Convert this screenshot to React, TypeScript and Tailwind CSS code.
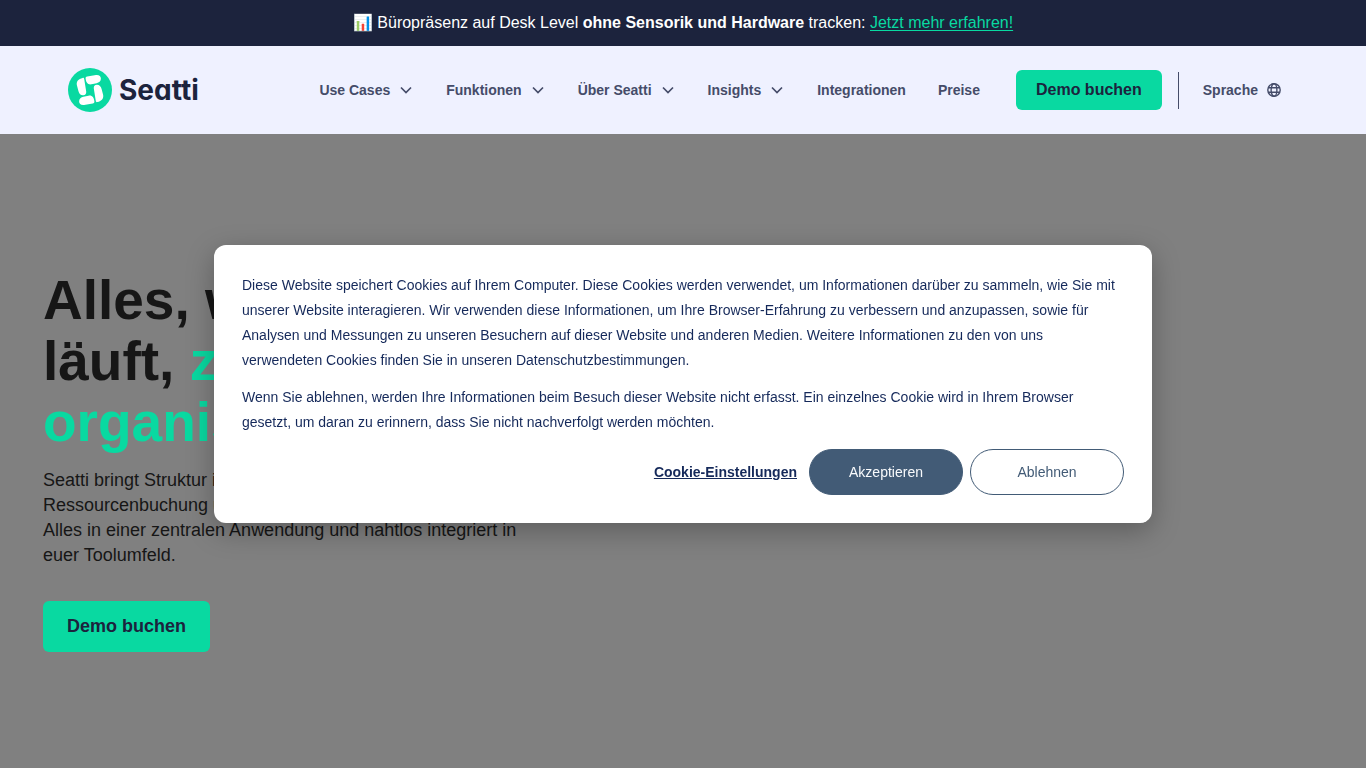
import {FormEvent, useState} from "react";

const navItems = [
    {label: "Use Cases", hasMenu: true},
    {label: "Funktionen", hasMenu: true},
    {label: "Über Seatti", hasMenu: true},
    {label: "Insights", hasMenu: true},
    {label: "Integrationen", hasMenu: false},
    {label: "Preise", hasMenu: false},
];

function ChevronIcon() {
    return (
        <svg className="h-4 w-4" viewBox="0 0 16 16" fill="none" stroke="currentColor" strokeWidth="1.7" aria-hidden="true">
            <path d="M3 5.5L8 10.5L13 5.5"/>
        </svg>
    );
}

function GlobeIcon() {
    return (
        <svg className="h-4 w-4" viewBox="0 0 16 16" fill="none" stroke="currentColor" strokeWidth="1.4" aria-hidden="true">
            <circle cx="8" cy="8" r="6.2"/>
            <ellipse cx="8" cy="8" rx="2.9" ry="6.2"/>
            <path d="M2.2 5.8H13.8M2.2 10.2H13.8"/>
        </svg>
    );
}

function Logo() {
    return (
        <a href="#" className="flex items-center gap-[7px]" aria-label="Seatti">
            <svg className="h-11 w-11" viewBox="0 0 44 44" aria-hidden="true">
                <circle cx="22" cy="22" r="22" fill="#09d9a1"/>
                {/* two petals, the other pair is the same turned upside down */}
                <g id="petals" fill="#fff">
                    <path d="M17.6 10.5C17.4 9.4 18.2 8.8 19.2 8.6L28 7C31 6.6 33 8.4 32.9 10.8C32.8 13.4 31 14.7 28.6 15.2L23.5 16.3C20 17 18 14.6 17.6 10.5Z"/>
                    <path d="M14.6 9.9C15.6 9.6 16 10.1 16.2 11L18.2 23.5C18.5 26 17.2 27.4 15 27.3C12.6 27.2 11 25.8 10.4 23L8.9 17.2C8.1 13.5 10.4 10.8 14.6 9.9Z"/>
                </g>
                <use href="#petals" transform="rotate(180 22 22)"/>
            </svg>
            <span className="font-['Inter',sans-serif] text-[28px] leading-8 font-bold text-[#1c233d] [font-feature-settings:'cv11']">Seatti</span>
        </a>
    );
}

function Banner() {
    return (
        <div className="bg-[#1c233d] px-4 py-[11px] text-center text-base leading-6 text-white">
            📊 Büropräsenz auf Desk Level <strong>ohne Sensorik und Hardware</strong> tracken:{" "}
            <a href="#" className="text-[#09d9a1] underline underline-offset-2">Jetzt mehr erfahren!</a>
        </div>
    );
}

function Navbar() {
    return (
        <header className="bg-[#eff1ff] px-4">
            <div className="mx-auto flex h-[88px] max-w-[1230px] items-center justify-between pr-4">
                <Logo/>
                <div className="flex items-center">
                    <nav className="mr-9 flex items-center gap-8 text-sm font-bold text-[#454c69]">
                        {navItems.map((item) => item.hasMenu ? (
                            <button key={item.label} type="button" className="flex items-center gap-2">
                                {item.label}
                                <ChevronIcon/>
                            </button>
                        ) : (
                            <a key={item.label} href="#">{item.label}</a>
                        ))}
                    </nav>
                    <button type="button" className="h-10 rounded-md bg-[#09d9a1] px-5 text-base font-bold text-[#1c233d]">
                        Demo buchen
                    </button>
                    <div className="ml-4 flex h-[37px] items-center border-l border-[#454c69] pl-6">
                        <button type="button" className="flex items-center gap-2 text-sm font-bold text-[#454c69]">
                            Sprache
                            <GlobeIcon/>
                        </button>
                    </div>
                </div>
            </div>
        </header>
    );
}

function Hero() {
    return (
        <main className="grow px-[43px] pt-[136px]">
            <h1 className="text-[55px] leading-[61px] font-bold text-[#161616]">
                Alles, was im Büro<br/>
                läuft, <span className="text-[#09d9a1]">zentral<br/>organisiert</span>
            </h1>
            <p className="mt-[15px] text-lg leading-[25px] text-[#161616]">
                Seatti bringt Struktur in eure Desk- und<br/>
                Ressourcenbuchung und Planung.<br/>
                Alles in einer zentralen Anwendung und nahtlos integriert in<br/>
                euer Toolumfeld.
            </p>
            <button type="button" className="mt-[33px] rounded-md bg-[#09d9a1] px-6 py-3 text-lg leading-[27px] font-bold text-[#1c233d]">
                Demo buchen
            </button>
        </main>
    );
}

function CookieDialog({onClose}: {onClose: () => void}) {
    function onSubmit(event: FormEvent<HTMLFormElement>) {
        event.preventDefault();
        onClose();
    }

    return (
        <div className="fixed inset-0 flex items-center justify-center">
            <form
                role="dialog"
                aria-label="Cookies"
                onSubmit={onSubmit}
                className="w-full max-w-[938px] rounded-xl bg-white p-7 text-sm text-[#15295a] shadow-[0_8px_28px_rgba(0,0,0,0.28)]"
            >
                <p className="mb-3 leading-[25px]">
                    Diese Website speichert Cookies auf Ihrem Computer. Diese Cookies werden verwendet, um
                    Informationen darüber zu sammeln, wie Sie mit unserer Website interagieren. Wir verwenden diese
                    Informationen, um Ihre Browser-Erfahrung zu verbessern und anzupassen, sowie für Analysen und
                    Messungen zu unseren Besuchern auf dieser Website und anderen Medien. Weitere Informationen zu
                    den von uns verwendeten Cookies finden Sie in unseren Datenschutzbestimmungen.
                </p>
                <p className="mb-[14px] leading-[25px]">
                    Wenn Sie ablehnen, werden Ihre Informationen beim Besuch dieser Website nicht erfasst. Ein
                    einzelnes Cookie wird in Ihrem Browser gesetzt, um daran zu erinnern, dass Sie nicht
                    nachverfolgt werden möchten.
                </p>
                <div className="flex items-center justify-end gap-[7px]">
                    <button type="button" className="mr-[5px] font-bold underline">Cookie-Einstellungen</button>
                    <button type="submit" className="h-[46px] w-[154px] rounded-full border border-[#425b76] bg-[#425b76] text-[#f8fafc]">
                        Akzeptieren
                    </button>
                    <button type="button" onClick={onClose} className="h-[46px] w-[154px] rounded-full border border-[#425b76] bg-white text-[#425b76]">
                        Ablehnen
                    </button>
                </div>
            </form>
        </div>
    );
}

export default function App() {
    const [showCookies, setShowCookies] = useState(true);

    return (
        <div className="flex min-h-screen flex-col bg-[#808080] font-['Liberation_Sans',Arial,sans-serif]">
            <Banner/>
            <Navbar/>
            <Hero/>
            {showCookies && <CookieDialog onClose={() => setShowCookies(false)}/>}
        </div>
    );
}
